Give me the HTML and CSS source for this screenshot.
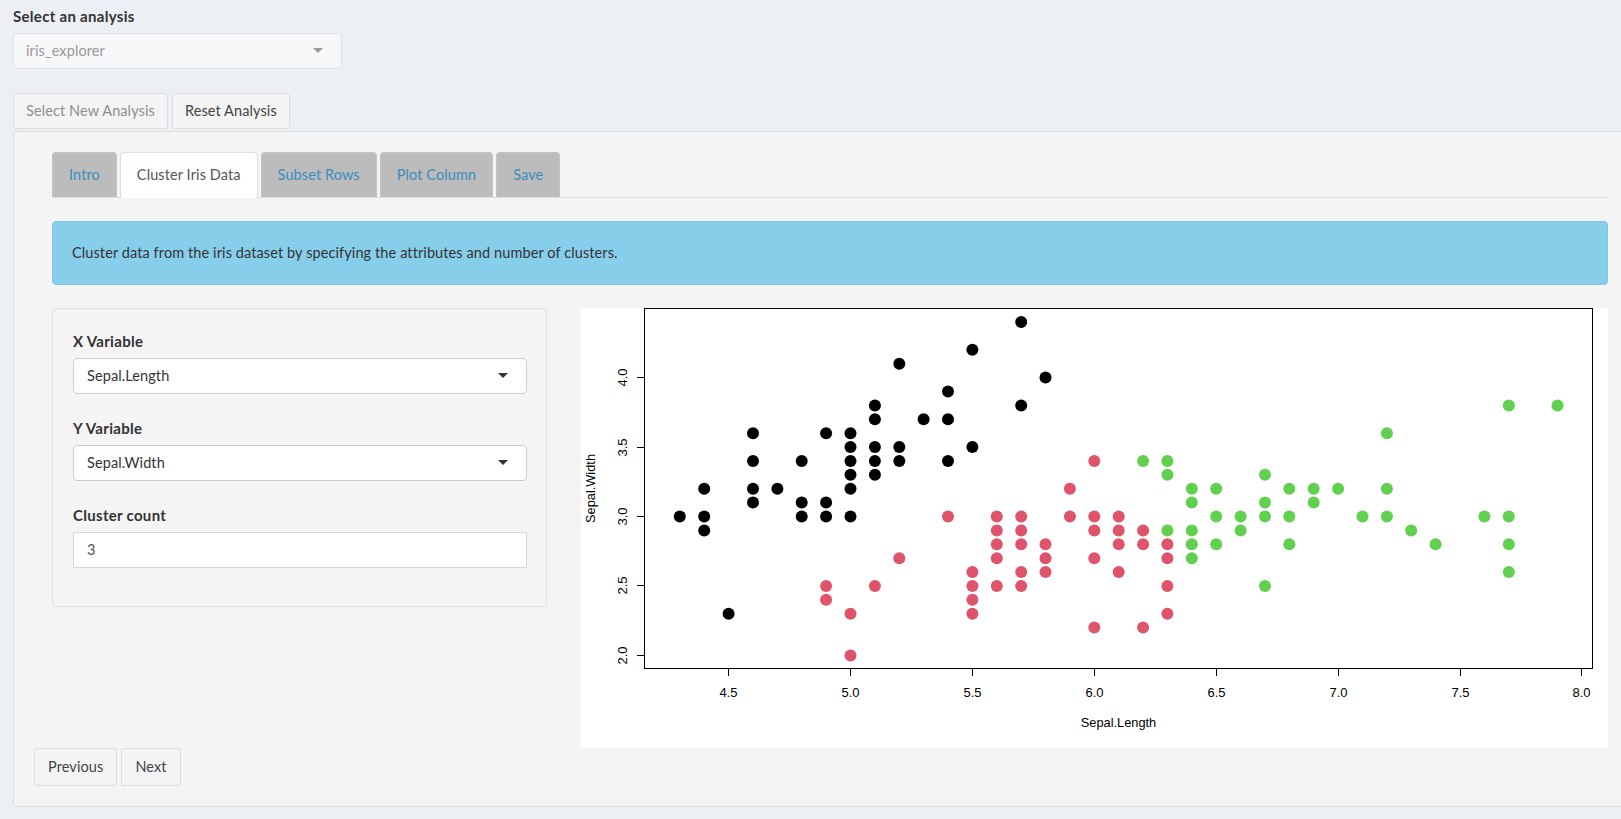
FILE: index.html
```html
<!DOCTYPE html>
<html>
<head>
<meta charset="utf-8">
<link rel="stylesheet" href="styles.css">
</head>
<body>
<div class="top">
  <div class="field-label">Select an analysis</div>
  <div class="select select-disabled"><span class="select-text">iris_explorer</span><span class="caret caret-muted"></span></div>
  <div class="top-actions">
    <button class="btn btn-disabled">Select New Analysis</button>
    <button class="btn">Reset Analysis</button>
  </div>
</div>
<div class="panel">
  <div class="tabset">
    <ul class="tabs">
      <li class="tab">Intro</li>
      <li class="tab tab-active">Cluster Iris Data</li>
      <li class="tab">Subset Rows</li>
      <li class="tab">Plot Column</li>
      <li class="tab">Save</li>
    </ul>
    <div class="alert">Cluster data from the iris dataset by specifying the attributes and number of clusters.</div>
    <div class="layout">
      <div class="well">
        <div class="form-group">
          <div class="field-label">X Variable</div>
          <div class="select"><span class="select-text">Sepal.Length</span><span class="caret"></span></div>
        </div>
        <div class="form-group">
          <div class="field-label">Y Variable</div>
          <div class="select"><span class="select-text">Sepal.Width</span><span class="caret"></span></div>
        </div>
        <div class="form-group">
          <div class="field-label">Cluster count</div>
          <div class="input">3</div>
        </div>
      </div>
      <div class="plot">
        <svg class="plot-svg" width="1027" height="440" viewBox="0 0 1027 440">
          <rect x="0" y="0" width="1027" height="440" fill="#ffffff"/>
          <g id="pts"></g>
          <g class="axes" stroke="#000" stroke-width="1" fill="none">
            <rect x="63.5" y="0.5" width="948" height="360"/>
            <path d="M147.5 360.5H1000.5M147.5 360.5V367.7M269.5 360.5V367.7M391.5 360.5V367.7M513.5 360.5V367.7M635.5 360.5V367.7M757.5 360.5V367.7M879.5 360.5V367.7M1000.5 360.5V367.7"/>
            <path d="M63.5 69.5V347.5M63.5 347.5H56.3M63.5 277.5H56.3M63.5 208.5H56.3M63.5 139.5H56.3M63.5 69.5H56.3"/>
          </g>
          <g class="ticklabels" text-anchor="middle">
            <text x="147.5" y="389">4.5</text>
            <text x="269.5" y="389">5.0</text>
            <text x="391.5" y="389">5.5</text>
            <text x="513.5" y="389">6.0</text>
            <text x="635.5" y="389">6.5</text>
            <text x="757.5" y="389">7.0</text>
            <text x="879.5" y="389">7.5</text>
            <text x="1000.5" y="389">8.0</text>
            <text transform="translate(46 347.5) rotate(-90)">2.0</text>
            <text transform="translate(46 277.5) rotate(-90)">2.5</text>
            <text transform="translate(46 208.5) rotate(-90)">3.0</text>
            <text transform="translate(46 139.5) rotate(-90)">3.5</text>
            <text transform="translate(46 69.5) rotate(-90)">4.0</text>
            <text class="axis-title" x="537.5" y="419">Sepal.Length</text>
            <text class="axis-title" transform="translate(13.5 180.5) rotate(-90)">Sepal.Width</text>
          </g>
        </svg>
      </div>
    </div>
  </div>
  <div class="nav-buttons">
    <button class="btn btn-nav">Previous</button>
    <button class="btn btn-nav">Next</button>
  </div>
</div>
<script src="script.js"></script>
</body>
</html>
```

FILE: styles.css
```css
html, body {
  margin: 0;
  padding: 0;
}
body {
  background: #ecf0f5;
  font-family: Lato, "Noto Sans", sans-serif;
  font-size: 14.5px;
  letter-spacing: 0.1px;
  line-height: 20px;
  color: #333;
  overflow: hidden;
  width: 1621px;
  height: 819px;
}
.top {
  padding: 6px 13px 0 13px;
}
.field-label {
  font-weight: 700;
  font-size: 15px;
  letter-spacing: 0.3px;
  line-height: 20px;
  margin-bottom: 7px;
  color: #333;
}
.select {
  display: flex;
  align-items: center;
  height: 36px;
  box-sizing: border-box;
  background: #fff;
  border: 1px solid #cccccc;
  border-radius: 4px;
  padding: 0 18px 0 13px;
  color: #333;
}
.select-disabled {
  width: 329px;
  background: #f6f7f9;
  border-color: #dfe2e6;
  color: #999;
  padding-left: 12px;
}
.select-text {
  flex: 1;
}
.caret {
  width: 0;
  height: 0;
  border-left: 5px solid transparent;
  border-right: 5px solid transparent;
  border-top: 5px solid #333;
  margin-top: -2px;
}
.caret-muted {
  border-top-color: #9a9a9a;
}
.top-actions {
  display: flex;
  gap: 4px;
  margin-top: 24px;
}
.btn {
  font-family: inherit;
  font-size: 14.5px;
  letter-spacing: 0.1px;
  line-height: 20px;
  height: 36px;
  box-sizing: border-box;
  padding: 0 12px;
  background: #f4f4f4;
  border: 1px solid #dddddd;
  border-radius: 3px;
  color: #444;
  cursor: pointer;
}
.btn-disabled {
  color: #8f8f8f;
}
.panel {
  margin: 2px -26px 0 13px;
  background: #f4f4f4;
  border: 1px solid #dddddd;
  border-radius: 4px;
  padding: 20px 20px 20px 20px;
}
.tabset {
  margin: 0 18px;
}
.tabs {
  list-style: none;
  margin: 0;
  padding: 0;
  display: flex;
  gap: 3px;
  border-bottom: 1px solid #dddddd;
}
.tab {
  height: 45px;
  box-sizing: border-box;
  padding: 12px 16px 0 16px;
  margin-bottom: -1px;
  background: #bcbcbc;
  border: 1px solid #c4c4c4;
  border-bottom: none;
  border-radius: 4px 4px 0 0;
  color: #3c8dbc;
}
.tab-active {
  background: #fff;
  border-color: #dddddd;
  color: #555;
  height: 46px;
}
.alert {
  margin-top: 23px;
  background: #87ceeb;
  border: 1px solid #7fc6e4;
  border-radius: 4px;
  padding: 21px 19px;
  color: #333;
}
.layout {
  margin-top: 23px;
  display: grid;
  grid-template-columns: 495px 1fr;
  column-gap: 34px;
  align-items: start;
}
.well {
  background: #f5f5f5;
  border: 1px solid #e3e3e3;
  border-radius: 4px;
  padding: 22px 19px 14px 20px;
  box-shadow: inset 0 1px 1px rgba(0,0,0,0.03);
}
.form-group {
  margin-bottom: 24px;
}
.input {
  height: 36px;
  box-sizing: border-box;
  background: #fff;
  border: 1px solid #d2d6de;
  padding: 7px 13px;
  color: #555;
}
.plot {
  background: #fff;
  height: 440px;
}
.plot-svg {
  display: block;
  letter-spacing: 0;
}
.axes {
  shape-rendering: crispEdges;
}
.ticklabels {
  font-family: "Liberation Sans", Arial, sans-serif;
  font-size: 13px;
  fill: #000;
}
.axis-title {
  font-size: 12.8px;
}
.nav-buttons {
  display: flex;
  gap: 4px;
}
.btn-nav {
  height: 38px;
  padding: 0 13px;
}
```

FILE: script.js
```js
(function () {
  var NS = 'http://www.w3.org/2000/svg';
  var g = document.getElementById('pts');
  var black = [[4.3,3.0],[4.4,3.2],[4.4,3.0],[4.4,2.9],[4.5,2.3],[4.6,3.6],[4.6,3.4],[4.6,3.2],[4.6,3.1],[4.7,3.2],[4.8,3.4],[4.8,3.1],[4.8,3.0],[4.9,3.6],[4.9,3.1],[4.9,3.0],[5.0,3.6],[5.0,3.5],[5.0,3.4],[5.0,3.3],[5.0,3.2],[5.0,3.0],[5.1,3.8],[5.1,3.7],[5.1,3.5],[5.1,3.4],[5.1,3.3],[5.2,4.1],[5.2,3.5],[5.2,3.4],[5.3,3.7],[5.4,3.9],[5.4,3.7],[5.4,3.4],[5.5,4.2],[5.5,3.5],[5.7,4.4],[5.7,3.8],[5.8,4.0]];
  var red = [[4.9,2.5],[4.9,2.4],[5.0,2.3],[5.0,2.0],[5.1,2.5],[5.2,2.7],[5.4,3.0],[5.5,2.6],[5.5,2.5],[5.5,2.4],[5.5,2.3],[5.6,3.0],[5.6,2.9],[5.6,2.8],[5.6,2.7],[5.6,2.5],[5.7,3.0],[5.7,2.9],[5.7,2.8],[5.7,2.6],[5.7,2.5],[5.8,2.8],[5.8,2.7],[5.8,2.6],[5.9,3.2],[5.9,3.0],[6.0,3.4],[6.0,3.0],[6.0,2.9],[6.0,2.7],[6.0,2.2],[6.1,3.0],[6.1,2.9],[6.1,2.8],[6.1,2.6],[6.2,2.9],[6.2,2.8],[6.2,2.2],[6.3,2.8],[6.3,2.7],[6.3,2.5],[6.3,2.3]];
  var green = [[6.2,3.4],[6.3,3.4],[6.3,3.3],[6.3,2.9],[6.4,3.2],[6.4,3.1],[6.4,2.9],[6.4,2.8],[6.4,2.7],[6.5,3.2],[6.5,3.0],[6.5,2.8],[6.6,3.0],[6.6,2.9],[6.7,3.3],[6.7,3.1],[6.7,3.0],[6.7,2.5],[6.8,3.2],[6.8,3.0],[6.8,2.8],[6.9,3.2],[6.9,3.1],[7.0,3.2],[7.1,3.0],[7.2,3.6],[7.2,3.2],[7.2,3.0],[7.3,2.9],[7.4,2.8],[7.6,3.0],[7.7,3.8],[7.7,3.0],[7.7,2.8],[7.7,2.6],[7.9,3.8]];
  function add(list, color) {
    list.forEach(function (p) {
      var c = document.createElementNS(NS, 'circle');
      c.setAttribute('cx', (269.5 + (p[0] - 5) * 243.8).toFixed(1));
      c.setAttribute('cy', (208.5 - (p[1] - 3) * 138.89).toFixed(1));
      c.setAttribute('r', '6');
      c.setAttribute('fill', color);
      g.appendChild(c);
    });
  }
  add(black, '#000000');
  add(red, '#DF536B');
  add(green, '#61D04F');
})();
```
